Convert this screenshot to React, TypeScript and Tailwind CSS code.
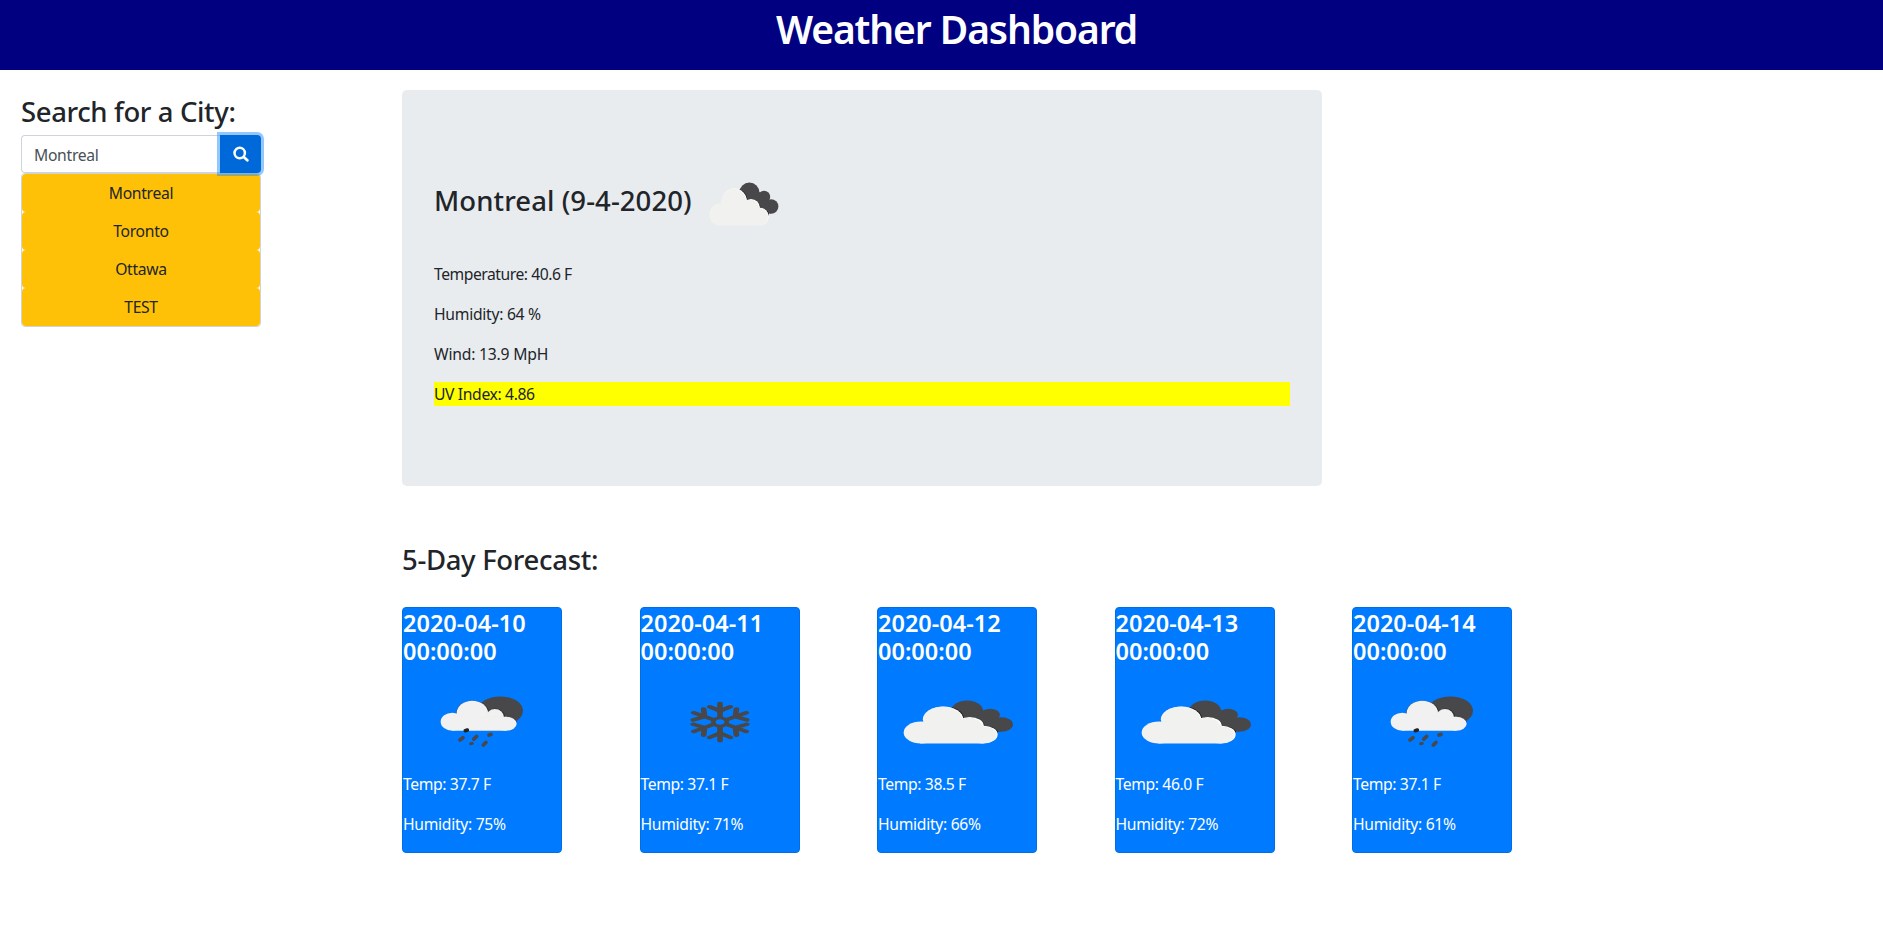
type IconKind = 'clouds' | 'rain' | 'snow';

function Clouds() {
  return (
    <g transform="translate(7.4 19.5) scale(0.3333)">
      <g fill="#48484a">
        <circle cx="147" cy="54" r="30" />
        <circle cx="191" cy="67" r="18.5" />
        <circle cx="212" cy="96" r="22" />
        <path d="M125 60 L175 50 L205 84 L212 118 L160 100 Z" />
      </g>
      <g fill="#1b1b1d">
        <path d="M118 44 A38 38 0 0 1 141 77 A27 27 0 0 1 180 101 A27 27 0 0 1 206 117 L203 125 L140 110 L110 70 Z" />
      </g>
      <g fill="#fff">
        <circle cx="102" cy="79.500" r="37.500" />
        <circle cx="152" cy="100" r="26.500" />
        <circle cx="178.500" cy="126" r="26.500" />
      </g>
      <g fill="#f1f1f0">
        <circle cx="59.500" cy="120" r="33" />
        <circle cx="100" cy="80" r="37" />
        <circle cx="150" cy="101" r="25" />
        <circle cx="177" cy="127" r="26" />
        <rect x="58" y="96" width="120" height="57" />
      </g>
    </g>
  );
}

function Rain() {
  return (
    <g transform="translate(20.25 16.4) scale(0.21097 0.33333)">
      <ellipse cx="196" cy="64" rx="68" ry="43" fill="#48484a" />
      <g fill="#2c2c2e">
        <ellipse cx="113" cy="71" rx="49" ry="37" />
        <ellipse cx="182" cy="83" rx="28" ry="26" />
        <path d="M205 82 Q236 80 246 98 L215 105 Z" />
      </g>
      <path d="M250 92 L266 84 L266 130 L244 130 Z" fill="#007bff" />
      <g fill="#f1f1f1">
        <ellipse cx="52" cy="97" rx="35" ry="27" />
        <ellipse cx="112" cy="71" rx="47" ry="37" />
        <ellipse cx="180" cy="84" rx="27" ry="25" />
        <ellipse cx="214" cy="103" rx="31" ry="21" />
        <rect x="52" y="82" width="162" height="42" />
      </g>
      <g stroke="#48484a" strokeLinecap="round" strokeWidth="11">
        <path d="M91 124 L97 122" stroke="#222224" />
        <path d="M116 149 L125 141" />
        <path d="M162 137 L168 135" />
        <path d="M75 152 L84 145" />
        <path d="M107 163 L112 162" strokeWidth="9" />
        <path d="M145 167 L153 159" />
      </g>
    </g>
  );
}

function Snow() {
  const angles = [0, 60, 120, 180, 240, 300];
  return (
    <g transform="translate(24.7 16.4) scale(0.21097 0.33333)">
      <g transform="translate(120 98) scale(1.62 1)" fill="none" stroke="#48484a" strokeLinecap="round" strokeWidth="10.500">
        <circle r="12.500" strokeWidth="8.500" />
        {angles.map((a) => (
          <path key={a} transform={`rotate(${a})`} d="M0 -15 V-56 M0 -33 L-19 -46 M0 -33 L19 -46" />
        ))}
      </g>
    </g>
  );
}

function WeatherIcon({ kind, className }: { kind: IconKind; className: string }) {
  return (
    <svg viewBox="0 0 100 100" preserveAspectRatio="none" className={className} aria-hidden="true">
      {kind === 'clouds' && <Clouds />}
      {kind === 'rain' && <Rain />}
      {kind === 'snow' && <Snow />}
    </svg>
  );
}

const cities = ['Montreal', 'Toronto', 'Ottawa', 'TEST'];

const days: { date: string; icon: IconKind; temp: string; humidity: string }[] = [
  { date: '2020-04-10', icon: 'rain', temp: '37.7', humidity: '75' },
  { date: '2020-04-11', icon: 'snow', temp: '37.1', humidity: '71' },
  { date: '2020-04-12', icon: 'clouds', temp: '38.5', humidity: '66' },
  { date: '2020-04-13', icon: 'clouds', temp: '46.0', humidity: '72' },
  { date: '2020-04-14', icon: 'rain', temp: '37.1', humidity: '61' },
];

export default function App() {
  return (
    <div className="min-h-[925px] bg-white font-['Noto_Sans','Open_Sans',sans-serif] text-[15.7px] leading-6 text-[#212529]">
      <header className="h-[70px] bg-[#000080] pl-[30px] pt-[5px] text-center">
        <h1 className="text-[39px] leading-[48px] font-semibold tracking-[-1.1px] text-white">Weather Dashboard</h1>
      </header>

      <div className="flex pl-[21px]">
        <aside className="w-[381px] pt-[25px]">
          <h3 className="mb-[6px] text-[27.5px] leading-[34px] font-medium tracking-[-0.38px]">Search for a City:</h3>
          <div className="flex w-[240px]">
            <input
              readOnly
              value="Montreal"
              aria-label="City"
              className="h-[38px] w-[199px] rounded-l-[4px] border border-r-0 border-[#ced4da] bg-white pt-[2px] pr-[13px] pl-[12px] text-[15.7px] tracking-[-0.3px] text-[#495057] outline-none"
            />
            <button
              aria-label="Search"
              className="relative flex h-[38px] w-[41px] items-center justify-center rounded-r-[4px] bg-[#0069d9] shadow-[0_0_0_3px_rgba(38,143,255,0.5)]"
            >
              <svg viewBox="0 0 16 16" className="size-4" fill="none" stroke="#fff" strokeLinecap="round">
                <circle cx="6.700" cy="7" r="5.200" strokeWidth="2.500" />
                <path d="M10.800 11 L14.300 14.200" strokeWidth="2.800" />
              </svg>
            </button>
          </div>
          <ul className="w-[240px] rounded-[4px] border border-[#ced4da] text-center tracking-[-0.3px]">
            {cities.map((name) => (
              <li key={name} className="h-[38px] rounded-[4px] bg-[#ffc107] leading-[38px]">
                {name}
              </li>
            ))}
          </ul>
        </aside>

        <main className="w-[1110px] pt-[20px]">
          <section className="h-[396px] w-[920px] rounded-[5px] bg-[#e9ecef] px-8 py-16">
            <div className="mb-2 flex h-[100px] items-center">
              <h3 className="w-[259px] pb-[6px] text-[27.5px] leading-[34px] font-medium tracking-[0.08px] whitespace-nowrap">
                Montreal (9-4-2020)
              </h3>
              <WeatherIcon kind="clouds" className="mt-[2px] size-[100px]" />
            </div>
            <p className="mb-4 tracking-[-0.47px]">Temperature: 40.6 F</p>
            <p className="mb-4 tracking-[-0.28px]">Humidity: 64 %</p>
            <p className="mb-4 tracking-[-0.2px]">Wind: 13.9 MpH</p>
            <p className="bg-[#ffff00] tracking-[-0.37px]">UV Index: 4.86</p>
          </section>

          <h3 className="mt-[57px] text-[27.5px] leading-[34px] font-medium tracking-[-0.32px]">5-Day Forecast:</h3>

          <div className="mt-[30px] flex justify-between">
            {days.map((d) => (
              <article key={d.date} className="h-[246px] w-[160px] rounded-[4px] border border-[#006fe6] bg-[#007bff] text-white">
                <h4 className="h-[65px] pt-px text-[23.5px] leading-[28px] font-semibold">
                  {d.date} 00:00:00
                </h4>
                <WeatherIcon kind={d.icon} className="-mb-px h-[100px] w-[158px]" />
                <p className="mb-4 tracking-[-0.38px]">Temp: {d.temp} F</p>
                <p className="tracking-[-0.3px]">Humidity: {d.humidity}%</p>
              </article>
            ))}
          </div>
        </main>
      </div>
    </div>
  );
}
